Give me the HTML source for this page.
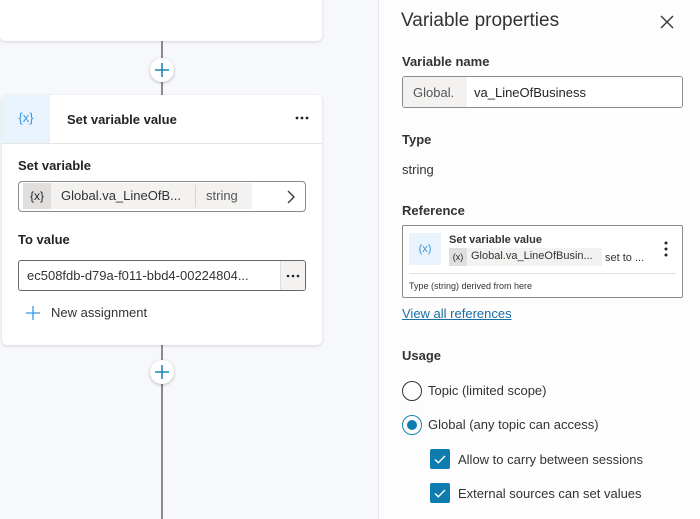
<!DOCTYPE html>
<html><head><style>
*{box-sizing:border-box;margin:0;padding:0}
body{width:700px;height:519px;overflow:hidden;background:#f6f8fb;font-family:"Liberation Sans",sans-serif;color:#242424;position:relative;font-size:14px}
.a{position:absolute}
.t{white-space:nowrap}
</style></head><body>
<div class="a" style="left:0;top:0;width:322px;height:41px;background:#fff;border-radius:0 0 5px 5px;box-shadow:0 1px 3px rgba(0,0,0,.15)"></div>
<div class="a" style="left:161px;top:41px;width:2px;height:55px;background:#8a8a8a"></div>
<div class="a" style="left:161px;top:345px;width:2px;height:174px;background:#8a8a8a"></div>
<div class="a" style="left:150px;top:58px;width:24px;height:24px;border-radius:50%;background:#fff;box-shadow:0 1px 3px rgba(0,0,0,.25)"><svg width="24" height="24"><path d="M12 5v14M5 12h14" stroke="#1a86b8" stroke-width="1.6"/></svg></div>
<div class="a" style="left:150px;top:360px;width:24px;height:24px;border-radius:50%;background:#fff;box-shadow:0 1px 3px rgba(0,0,0,.25)"><svg width="24" height="24"><path d="M12 5v14M5 12h14" stroke="#1a86b8" stroke-width="1.6"/></svg></div>
<div class="a" style="left:2px;top:95px;width:320px;height:250px;background:#fff;border-radius:5px;box-shadow:0 1px 3px rgba(0,0,0,.15);overflow:hidden">
 <div class="a" style="left:0;top:0;width:48px;height:48px;background:#e8f3fd;color:#3a96dd;font-size:13px;text-align:center;line-height:46px">{x}</div>
 <div class="a t" style="left:65px;top:17px;font-weight:bold;font-size:13px">Set variable value</div>
 <svg class="a" style="left:292px;top:20px" width="16" height="6"><circle cx="3" cy="3" r="1.4" fill="#222"/><circle cx="8" cy="3" r="1.4" fill="#222"/><circle cx="13" cy="3" r="1.4" fill="#222"/></svg>
 <div class="a" style="left:0;top:48px;width:320px;height:1px;background:#e5e5e5"></div>
 <div class="a t" style="left:16px;top:63px;font-weight:bold;font-size:13px">Set variable</div>
 <div class="a" style="left:16px;top:86px;width:288px;height:31px;border:1px solid #8a8a8a;border-radius:4px"></div>
 <div class="a" style="left:21px;top:88px;width:229px;height:26px;background:#f3f2f1"></div>
 <div class="a t" style="left:21px;top:88px;width:28px;height:26px;background:#e1dfdd;font-size:12px;line-height:26px;text-align:center">{x}</div>
 <div class="a t" style="left:59px;top:93px;font-size:13px;color:#333">Global.va_LineOfB...</div>
 <div class="a" style="left:193px;top:90px;width:1px;height:22px;background:#d6d6d6"></div>
 <div class="a t" style="left:204px;top:93px;font-size:13px;color:#555">string</div>
 <svg class="a" style="left:284px;top:94px" width="10" height="16"><path d="M2 2l6 6-6 6" stroke="#333" stroke-width="1.3" fill="none"/></svg>
 <div class="a t" style="left:16px;top:137px;font-weight:bold;font-size:13px">To value</div>
 <div class="a" style="left:16px;top:165px;width:288px;height:31px;border:1px solid #666;border-radius:3px;overflow:hidden">
  <div class="a" style="right:0;top:0;width:25px;height:29px;background:#f3f2f1;border-left:1px solid #ddd"><svg width="24" height="29"><circle cx="7" cy="15" r="1.3" fill="#222"/><circle cx="12" cy="15" r="1.3" fill="#222"/><circle cx="17" cy="15" r="1.3" fill="#222"/></svg></div>
 </div>
 <div class="a t" style="left:25px;top:173px;font-size:13px;color:#333">ec508fdb-d79a-f011-bbd4-00224804...</div>
 <svg class="a" style="left:23px;top:210px" width="16" height="16"><path d="M8 1v14M1 8h14" stroke="#3a96dd" stroke-width="1.3"/></svg>
 <div class="a t" style="left:49px;top:210px;font-size:13px;color:#333">New assignment</div>
</div>
<div class="a" style="left:378px;top:0;width:322px;height:519px;background:#fdfdfd;border-left:1px solid #e6e6e6"></div>
<div class="a t" style="left:401px;top:10px;font-size:19px;color:#333">Variable properties</div>
<svg class="a" style="left:660px;top:15px" width="14" height="14"><path d="M1 1l12 12M13 1L1 13" stroke="#333" stroke-width="1.3"/></svg>
<div class="a t" style="left:402px;top:54px;font-weight:bold;font-size:13px;color:#333">Variable name</div>
<div class="a" style="left:402px;top:76px;width:281px;height:32px;border:1px solid #8a8a8a;border-radius:3px;overflow:hidden;background:#fff">
 <div class="a" style="left:0;top:0;width:64px;height:30px;background:#f3f2f1"></div>
</div>
<div class="a t" style="left:413px;top:85px;font-size:13px;color:#555">Global.</div>
<div class="a t" style="left:474px;top:85px;font-size:13px;color:#242424">va_LineOfBusiness</div>
<div class="a t" style="left:402px;top:132px;font-weight:bold;font-size:13px;color:#333">Type</div>
<div class="a t" style="left:402px;top:162px;font-size:13px;color:#333">string</div>
<div class="a t" style="left:402px;top:203px;font-weight:bold;font-size:13px;color:#333">Reference</div>
<div class="a" style="left:402px;top:225px;width:281px;height:73px;border:1px solid #8a8a8a;border-radius:2px;background:#fff"></div>
<div class="a" style="left:409px;top:233px;width:32px;height:32px;background:#e8f3fd;color:#3a96dd;font-size:11px;text-align:center;line-height:32px">(x)</div>
<div class="a t" style="left:449px;top:234px;font-size:11px;font-weight:bold;color:#333">Set variable value</div>
<div class="a" style="left:449px;top:248px;width:153px;height:18px;background:#f3f2f1"></div>
<div class="a" style="left:449px;top:248px;width:18px;height:18px;background:#e1dfdd;font-size:9px;text-align:center;line-height:18px">(x)</div>
<div class="a t" style="left:471px;top:250px;font-size:11px;color:#333">Global.va_LineOfBusin...</div>
<div class="a t" style="left:605px;top:252px;font-size:11px;color:#333">set to ...</div>
<svg class="a" style="left:663px;top:240px" width="6" height="18"><circle cx="3" cy="3" r="1.5" fill="#222"/><circle cx="3" cy="9" r="1.5" fill="#222"/><circle cx="3" cy="15" r="1.5" fill="#222"/></svg>
<div class="a" style="left:409px;top:273px;width:267px;height:1px;background:#e1e1e1"></div>
<div class="a t" style="left:409px;top:281px;font-size:9px;color:#333">Type (string) derived from here</div>
<div class="a t" style="left:402px;top:306px;font-size:13px;color:#1a6fa3;text-decoration:underline">View all references</div>
<div class="a t" style="left:402px;top:348px;font-weight:bold;font-size:13px;color:#333">Usage</div>
<div class="a" style="left:402px;top:381px;width:20px;height:20px;border:1px solid #333;border-radius:50%"></div>
<div class="a t" style="left:428px;top:383px;font-size:13px;color:#333">Topic (limited scope)</div>
<div class="a" style="left:402px;top:415px;width:20px;height:20px;border:1px solid #1a86b8;border-radius:50%"><div class="a" style="left:4px;top:4px;width:10px;height:10px;border-radius:50%;background:#0f7cb0"></div></div>
<div class="a t" style="left:428px;top:417px;font-size:13px;color:#333">Global (any topic can access)</div>
<div class="a" style="left:430px;top:449px;width:20px;height:20px;background:#0f7cb0;border-radius:2px"><svg width="20" height="20"><path d="M5 10.5l3.3 3.3L15 7" stroke="#fff" stroke-width="1.4" fill="none"/></svg></div>
<div class="a t" style="left:458px;top:452px;font-size:13px;color:#333">Allow to carry between sessions</div>
<div class="a" style="left:430px;top:483px;width:20px;height:20px;background:#0f7cb0;border-radius:2px"><svg width="20" height="20"><path d="M5 10.5l3.3 3.3L15 7" stroke="#fff" stroke-width="1.4" fill="none"/></svg></div>
<div class="a t" style="left:458px;top:486px;font-size:13px;color:#333">External sources can set values</div>
</body></html>
